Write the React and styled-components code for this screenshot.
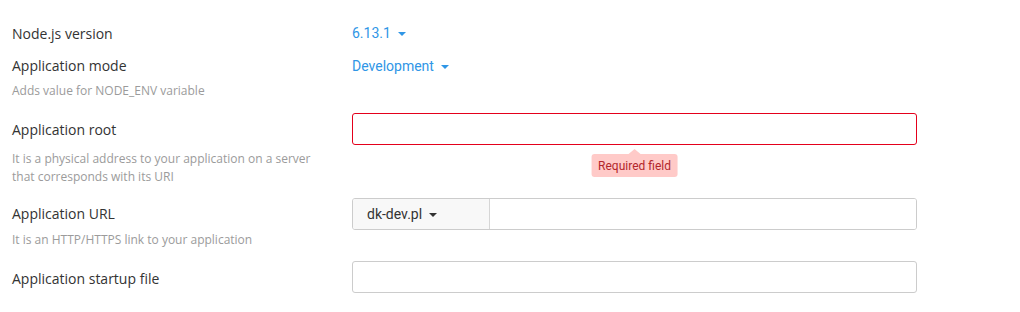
import React from "react";
import styled, { createGlobalStyle } from "styled-components";

const GlobalStyle = createGlobalStyle`
  html, body {
    margin: 0;
    padding: 0;
    background: #ffffff;
  }
  * {
    box-sizing: border-box;
  }
`;

const Form = styled.div`
  padding: 23px 0 0 12px;
  font-family: "Open Sans", "Liberation Sans", sans-serif;
`;

const Row = styled.div`
  display: grid;
  grid-template-columns: 340px 565px;
  align-items: start;
  margin-bottom: ${(p) => p.$mb ?? 13}px;
`;

const LabelCol = styled.div`
  padding-top: ${(p) => p.$pt || 0}px;
`;

const Label = styled.div`
  font-size: 14px;
  line-height: 20px;
  color: #333333;
`;

const Hint = styled.div`
  margin-top: ${(p) => p.$mt || 6}px;
  max-width: 318px;
  font-size: 12px;
  line-height: 18px;
  color: #9b9b9b;
`;

const ValueCol = styled.div`
  display: flex;
  align-items: flex-start;
`;

const Dropdown = styled.button`
  display: flex;
  align-items: center;
  gap: 7px;
  height: 20px;
  padding: 0;
  border: none;
  background: none;
  font-family: Roboto, "Liberation Sans", sans-serif;
  font-size: 14px;
  line-height: 20px;
  color: #2f96e6;
  cursor: pointer;
`;

const Caret = styled.span`
  width: 0;
  height: 0;
  border-left: 4px solid transparent;
  border-right: 4px solid transparent;
  border-top: 4px solid ${(p) => p.$color || "#2f96e6"};
  margin-top: 1px;
`;

const Field = styled.div`
  position: relative;
`;

const Input = styled.input`
  display: block;
  width: 100%;
  height: 32px;
  padding: 0 12px;
  border: 1px solid ${(p) => (p.$error ? "#e4001b" : "#cccccc")};
  border-radius: 3px;
  font-family: Roboto, "Liberation Sans", sans-serif;
  font-size: 14px;
  color: #333333;
  outline: none;
  background: #ffffff;
`;

const Group = styled.div`
  display: flex;
  height: 32px;
  border: 1px solid #cccccc;
  border-radius: 3px;
  overflow: hidden;
`;

const Prefix = styled.button`
  display: flex;
  align-items: center;
  gap: 7px;
  width: 137px;
  padding: 0 0 0 14px;
  border: none;
  border-right: 1px solid #d6d6d6;
  background: #f8f8f8;
  font-family: Roboto, "Liberation Sans", sans-serif;
  font-size: 14px;
  color: #333333;
  cursor: pointer;
`;

const GroupInput = styled.input`
  flex: 1;
  border: none;
  padding: 0 12px;
  font-size: 14px;
  outline: none;
`;

const Tooltip = styled.div`
  position: absolute;
  top: 41px;
  left: 50%;
  transform: translateX(-50%);
  padding: 0 7px;
  height: 23px;
  display: flex;
  align-items: center;
  background: #ffcac8;
  border-radius: 3px;
  font-family: Roboto, "Liberation Sans", sans-serif;
  font-size: 12px;
  color: #b3262b;
  white-space: nowrap;

  &::before {
    content: "";
    position: absolute;
    top: -5px;
    left: 50%;
    transform: translateX(-50%);
    border-left: 6px solid transparent;
    border-right: 6px solid transparent;
    border-bottom: 5px solid #ffcac8;
  }
`;

export default function App() {
  return (
    <>
      <GlobalStyle />
      <Form>
        <Row $mb={12}>
          <LabelCol $pt={1}>
            <Label>Node.js version</Label>
          </LabelCol>
          <ValueCol>
            <Dropdown>
              6.13.1 <Caret />
            </Dropdown>
          </ValueCol>
        </Row>

        <Row>
          <LabelCol>
            <Label>Application mode</Label>
            <Hint>Adds value for NODE_ENV variable</Hint>
          </LabelCol>
          <ValueCol>
            <Dropdown>
              Development <Caret />
            </Dropdown>
          </ValueCol>
        </Row>

        <Row $mb={12}>
          <LabelCol $pt={7}>
            <Label>Application root</Label>
            <Hint $mt={10}>
              It is a physical address to your application on a server that
              corresponds with its URI
            </Hint>
          </LabelCol>
          <Field>
            <Input $error />
            <Tooltip>Required field</Tooltip>
          </Field>
        </Row>

        <Row $mb={12}>
          <LabelCol $pt={6}>
            <Label>Application URL</Label>
            <Hint $mt={7}>It is an HTTP/HTTPS link to your application</Hint>
          </LabelCol>
          <Field>
            <Group>
              <Prefix>
                dk-dev.pl <Caret $color="#333333" />
              </Prefix>
              <GroupInput />
            </Group>
          </Field>
        </Row>

        <Row>
          <LabelCol $pt={8}>
            <Label>Application startup file</Label>
          </LabelCol>
          <Field>
            <Input />
          </Field>
        </Row>
      </Form>
    </>
  );
}
